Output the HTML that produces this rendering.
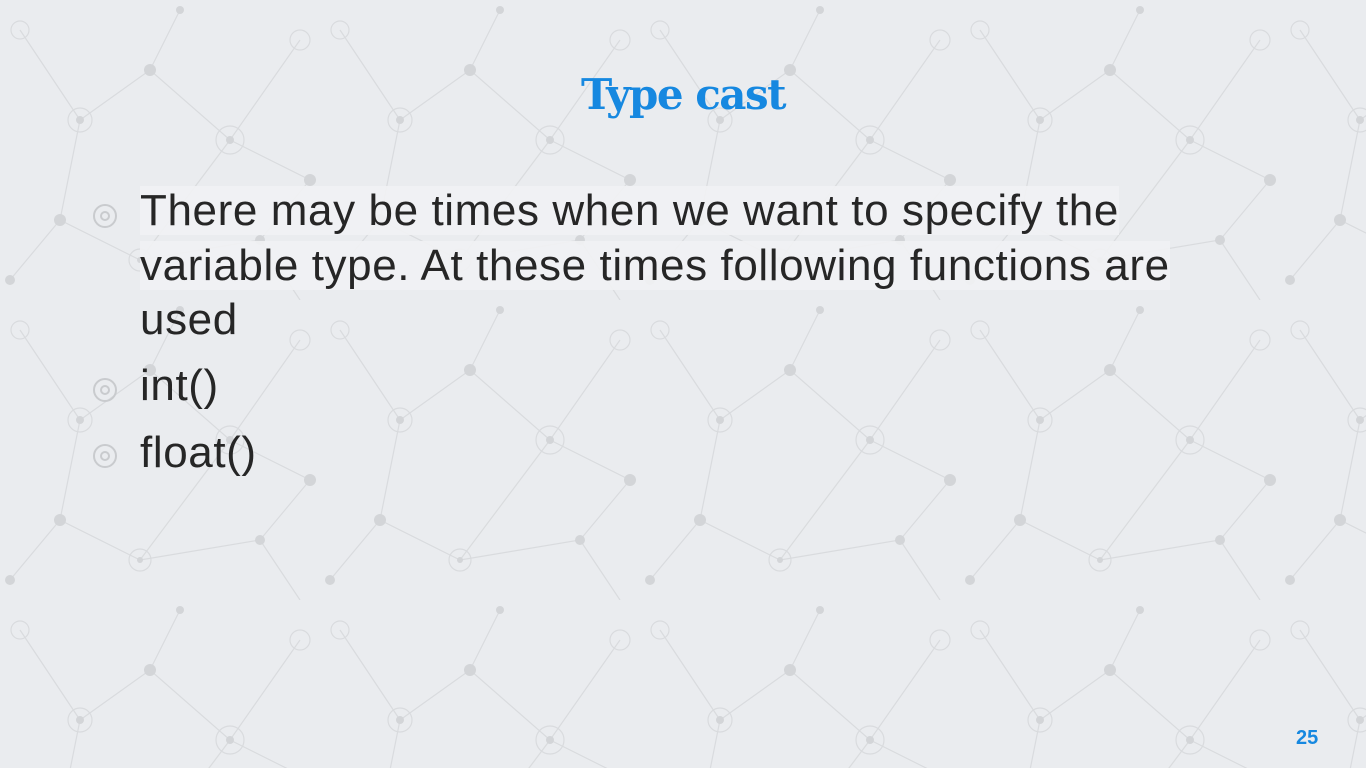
<!DOCTYPE html>
<html><head><meta charset="utf-8"><style>
html,body{margin:0;padding:0}
body{width:1366px;height:768px;overflow:hidden;background:#eaecef;position:relative;font-family:"Liberation Sans",sans-serif}
svg.bg{position:absolute;left:0;top:0}
.title{position:absolute;left:0;width:1366px;top:70px;text-align:center;font-family:"DejaVu Serif",serif;font-weight:bold;font-size:42px;color:#1688e0;letter-spacing:-1.5px}
.t{position:absolute;left:140px;font-size:44px;color:#262626;white-space:nowrap;line-height:44px;letter-spacing:0.6px}
.hl{background:rgba(241,242,244,0.9)}
.b{position:absolute;left:93px;width:24px;height:24px;border:2px solid #c9cbce;border-radius:50%;box-sizing:border-box}
.b::after{content:"";position:absolute;left:5px;top:5px;width:10px;height:10px;border:2px solid #c9cbce;border-radius:50%;box-sizing:border-box}
.num{position:absolute;left:1296px;top:727px;font-weight:bold;font-size:20px;color:#1688e0}
</style></head><body>
<svg class="bg" width="1366" height="768">
<defs><pattern id="p" width="320" height="300" patternUnits="userSpaceOnUse">
<g stroke="#d9dbde" stroke-width="1.2" fill="none">
<path d="M20 30 L80 120 L150 70 L230 140 L300 40 M80 120 L60 220 L140 260 L230 140 M150 70 L180 10 M60 220 L10 280 M140 260 L260 240 L310 180 L230 140 M260 240 L300 300"/>
<circle cx="80" cy="120" r="12"/><circle cx="230" cy="140" r="14"/><circle cx="140" cy="260" r="11"/><circle cx="300" cy="40" r="10"/><circle cx="20" cy="30" r="9"/>
</g>
<g fill="#d3d5d8">
<circle cx="80" cy="120" r="4"/><circle cx="230" cy="140" r="4"/><circle cx="150" cy="70" r="6"/><circle cx="60" cy="220" r="6"/><circle cx="260" cy="240" r="5"/><circle cx="310" cy="180" r="6"/><circle cx="180" cy="10" r="4"/><circle cx="10" cy="280" r="5"/><circle cx="140" cy="260" r="3"/>
</g></pattern></defs>
<rect width="1366" height="768" fill="url(#p)"/>
</svg>
<div class="title">Type cast</div>
<div class="b" style="top:204px"></div>
<div class="t" style="top:189px"><span class="hl">There may be times when we want to specify the </span></div>
<div class="t" style="top:244px"><span class="hl">variable type. At these times following functions are</span></div>
<div class="t" style="top:298px">used</div>
<div class="b" style="top:378px"></div>
<div class="t" style="top:364px">int()</div>
<div class="b" style="top:444px"></div>
<div class="t" style="top:431px">float()</div>
<div class="num">25</div>
</body></html>
